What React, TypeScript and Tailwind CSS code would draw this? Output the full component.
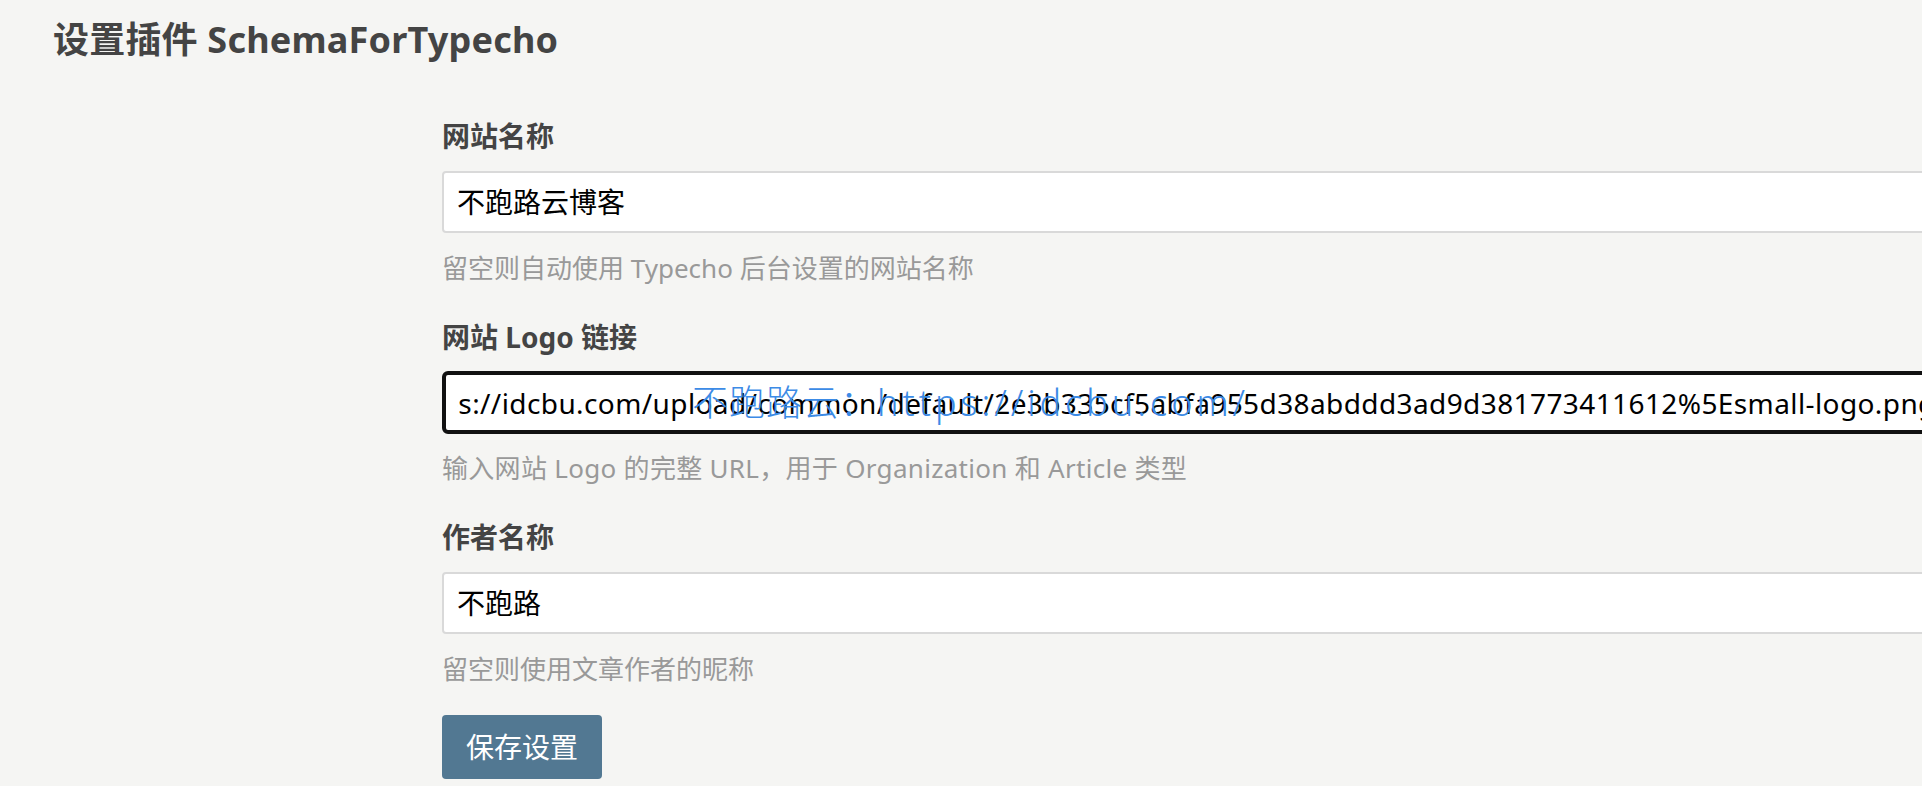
export default function App() {
  return (
    <div className="h-screen w-full overflow-hidden bg-[#f5f5f3] font-['Noto_Sans','Noto_Sans_CJK_SC',sans-serif] text-[#444]">
      <h2 className="pl-[53px] pt-[18px] text-[36px] leading-[44px] font-bold tracking-[0.2px]">设置插件 SchemaForTypecho</h2>

      <div className="ml-[442px] mt-[54px] w-[1560px]">
        <div className="flex flex-col">
          <label className="text-[28px] leading-[40px] font-bold">网站名称</label>
          <div className="mt-[15px] flex h-[62px] items-center rounded-[4px] border-2 border-[#d9d9d9] bg-white px-[13px] text-[28px] text-black">
            不跑路云博客
          </div>
          <p className="mt-[17px] text-[26px] leading-[36px] text-[#999]">留空则自动使用 Typecho 后台设置的网站名称</p>
        </div>

        <div className="mt-[31px] flex flex-col">
          <label className="text-[28px] leading-[40px] font-bold">网站 Logo 链接</label>
          <div className="relative mt-[14px] flex h-[63px] items-center rounded-[6px] border-[4px] border-[#111] bg-white px-[11px] text-[28px] text-black">
            <div className="overflow-hidden whitespace-nowrap">
              <span className="-ml-[55px] inline-block tracking-[0.4px]">https://idcbu.com/upload/common/default/2e3b335cf5abfa955d38abddd3ad9d381773411612%5Esmall-logo.png</span>
            </div>
            {/* watermark over the field */}
            <div className="absolute left-[246px] top-[8px] whitespace-nowrap text-[36px] leading-[40px] font-light text-[#3c8be6]">
              <span className="tracking-[1px]">不跑路云：</span>
              <span className="tracking-[4px]">https://idcbu.com/</span>
            </div>
          </div>
          <p className="mt-[16px] text-[26px] leading-[36px] text-[#999] tracking-[0.3px]">输入网站 Logo 的完整 URL，用于 Organization 和 Article 类型</p>
        </div>

        <div className="mt-[31px] flex flex-col">
          <label className="text-[28px] leading-[40px] font-bold">作者名称</label>
          <div className="mt-[15px] flex h-[62px] items-center rounded-[4px] border-2 border-[#d9d9d9] bg-white px-[13px] text-[28px] text-black">
            不跑路
          </div>
          <p className="mt-[17px] text-[26px] leading-[36px] text-[#999]">留空则使用文章作者的昵称</p>
        </div>

        <button type="button" className="mt-[28px] h-[64px] rounded-[4px] bg-[#527892] px-[24px] text-[28px] text-white">
          保存设置
        </button>
      </div>
    </div>
  );
}
